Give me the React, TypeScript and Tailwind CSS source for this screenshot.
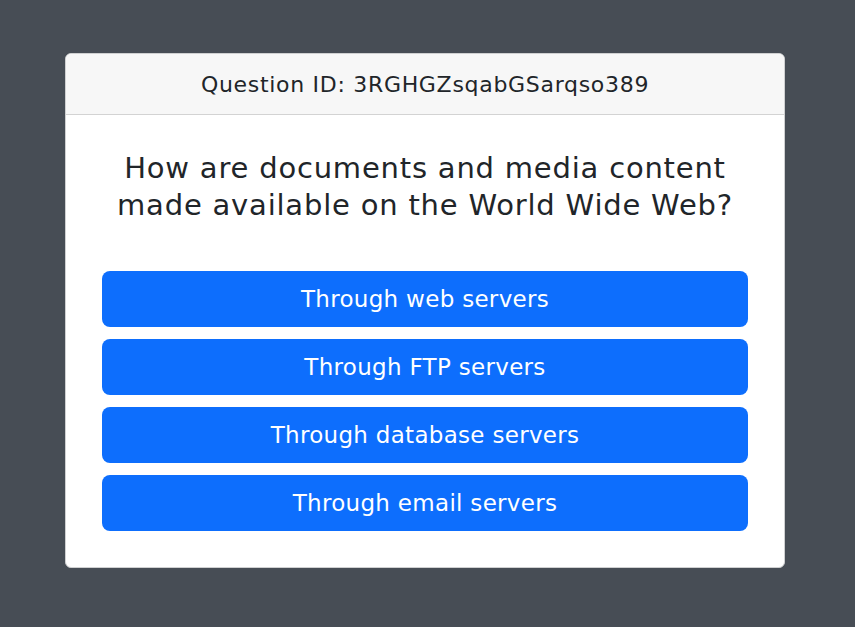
import React from 'react';

const ANSWERS = [
  'Through web servers',
  'Through FTP servers',
  'Through database servers',
  'Through email servers',
];

export default function App() {
  return (
    <div
      className="min-h-screen w-full bg-[#474d55] pt-[53px]"
      style={{ fontFamily: '"DejaVu Sans", "Liberation Sans", sans-serif' }}
    >
      <div className="ml-[65px] w-[720px] overflow-hidden rounded-md border border-[#cfd0d1] bg-white">
        {/* Header */}
        <div className="flex h-[61px] items-center justify-center border-b border-[#d3d3d3] bg-[#f7f7f7] text-[22px] tracking-[0.7px] text-[#212529]">
          Question ID: 3RGHGZsqabGSarqso389
        </div>

        {/* Body */}
        <div className="px-[36px] pb-[36px] pt-[35px]">
          <h2 className="mb-[47px] text-center text-[29px] leading-[37px] tracking-[0.8px] text-[#212529]">
            How are documents and media content
            <br />
            made available on the World Wide Web?
          </h2>
          <div className="flex flex-col gap-[12px]">
            {ANSWERS.map((a) => (
              <button
                key={a}
                className="h-[56px] w-full rounded-lg bg-[#0d6efd] text-[23px] tracking-[0.3px] text-white"
              >
                {a}
              </button>
            ))}
          </div>
        </div>
      </div>
    </div>
  );
}
